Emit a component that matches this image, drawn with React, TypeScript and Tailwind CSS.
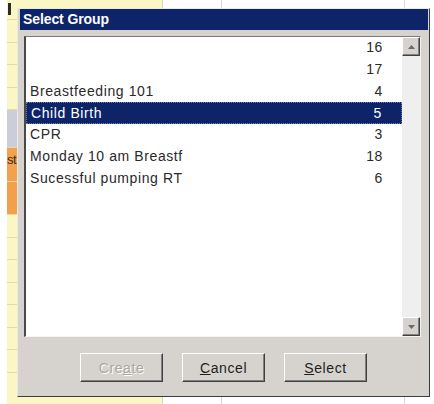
import React from "react";

const font = { fontFamily: '"Liberation Sans", Arial, sans-serif' };

type Row = { name: string; count: string };

const rows: Row[] = [
  { name: "", count: "16" },
  { name: "", count: "17" },
  { name: "Breastfeeding 101", count: "4" },
  { name: "Child Birth", count: "5" },
  { name: "CPR", count: "3" },
  { name: "Monday 10 am Breastf", count: "18" },
  { name: "Sucessful pumping RT", count: "6" },
];

const SELECTED = 3;

function ArrowButton({ dir }: { dir: "up" | "down" }) {
  return (
    <div className="h-[19px] w-full bg-[#d6d3ce] border border-t-white border-l-white border-r-[#404040] border-b-[#404040] shadow-[inset_-1px_-1px_0_#808080] flex items-center justify-center">
      <svg width="7" height="4" viewBox="0 0 7 4">
        {dir === "up" ? (
          <polygon points="0,4 7,4 3.5,0" fill="#6a6a6a" />
        ) : (
          <polygon points="0,0 7,0 3.5,4" fill="#6a6a6a" />
        )}
      </svg>
    </div>
  );
}

function DlgButton({
  children,
  disabled,
}: {
  children: React.ReactNode;
  disabled?: boolean;
}) {
  return (
    <div
      className={
        "w-[83px] h-[29px] pt-[1px] flex items-center justify-center bg-[#d6d3ce] border border-t-white border-l-white border-r-[#404040] border-b-[#404040] shadow-[inset_-1px_-1px_0_#808080] text-[14px] tracking-[0.6px] " +
        (disabled
          ? "text-[#a9a7a2] [text-shadow:1px_1px_0_#ffffff]"
          : "text-[#1e1e1e]")
      }
      style={font}
    >
      {children}
    </div>
  );
}

// spreadsheet cells in the yellow column behind the dialog
const cells: { h: number; bg: string; text?: string }[] = [
  { h: 20, bg: "#fbf7c4" },
  { h: 23, bg: "#fbf7c4" },
  { h: 22, bg: "#fbf7c4" },
  { h: 23, bg: "#fbf7c4" },
  { h: 22, bg: "#fbf7c4" },
  { h: 38, bg: "#cdccd9" },
  { h: 34, bg: "#f4a14e", text: "st" },
  { h: 33, bg: "#f2a04c" },
  { h: 23, bg: "#fbf7c4" },
  { h: 22, bg: "#fbf7c4" },
  { h: 23, bg: "#fbf7c4" },
  { h: 22, bg: "#fbf7c4" },
  { h: 23, bg: "#fbf7c4" },
  { h: 22, bg: "#fbf7c4" },
  { h: 23, bg: "#fbf7c4" },
  { h: 40, bg: "#fbf7c4" },
];

export default function App() {
  return (
    <div className="relative w-[434px] h-[404px] overflow-hidden bg-white">
      {/* worksheet underneath */}
      <div className="absolute inset-0 flex">
        <div className="w-[7px] h-full bg-white" />
        <div className="w-[156px] h-full flex flex-col border-r border-[#d6d6d6]">
          {cells.map((c, i) => (
            <div
              key={i}
              className="shrink-0 border-b border-[#e2dca0] flex items-start text-[13px] text-[#3a2a1a]"
              style={{ height: c.h, background: c.bg, ...font }}
            >
              {c.text ? (
                <span className="pt-[2px] tracking-[-0.5px]">{c.text}</span>
              ) : null}
            </div>
          ))}
        </div>
        <div className="w-[59px] h-full border-r border-[#d6d6d6]" />
        <div className="w-[183px] h-full border-r border-[#d6d6d6]" />
        <div className="flex-1 h-full" />
      </div>
      <div className="absolute left-[8px] top-[3px] w-[3px] h-[12px] bg-[#2a2a2a]" />

      {/* dialog window */}
      <div className="absolute left-[17px] top-[8px] w-[413px] h-[389px] bg-[#d6d3ce] border border-t-[#ece9e4] border-l-[#ece9e4] border-r-[#3c3c3c] border-b-[#3c3c3c] flex flex-col">
        <div className="ml-[2px] mr-[1px] h-[21px] bg-[#0d2468] flex items-center pl-[3px]">
          <span
            className="text-white font-bold text-[14px] tracking-[-0.1px]"
            style={font}
          >
            Select Group
          </span>
        </div>

        {/* list box */}
        <div className="mt-[6px] ml-[6px] w-[397px] h-[301px] bg-white border-l-2 border-t border-l-[#4a4a4a] border-t-[#7a7a7a] border-r border-b border-r-[#f4f4f4] border-b-[#f4f4f4] flex">
          <div className="flex-1 flex flex-col">
            {rows.map((r, i) => {
              const sel = i === SELECTED;
              return (
                <div
                  key={i}
                  className={
                    "h-[21.75px] shrink-0 flex items-center justify-between pl-[4px] pr-[19px] text-[14px] tracking-[0.6px] " +
                    (sel
                      ? "bg-[#0d2468] text-white border border-dotted border-[#6f7fb0]"
                      : "text-[#2a2a2a]")
                  }
                  style={font}
                >
                  <span>{r.name}</span>
                  <span>{r.count}</span>
                </div>
              );
            })}
          </div>
          <div className="w-[18px] flex flex-col bg-[#efefef]">
            <ArrowButton dir="up" />
            <div className="flex-1" />
            <ArrowButton dir="down" />
          </div>
        </div>

        {/* actions */}
        <div className="mt-[16px] flex justify-center gap-[19px]">
          <DlgButton disabled>
            Cre<span className="underline">a</span>te
          </DlgButton>
          <DlgButton>
            <span className="underline">C</span>ancel
          </DlgButton>
          <DlgButton>
            <span className="underline">S</span>elect
          </DlgButton>
        </div>
      </div>
    </div>
  );
}
